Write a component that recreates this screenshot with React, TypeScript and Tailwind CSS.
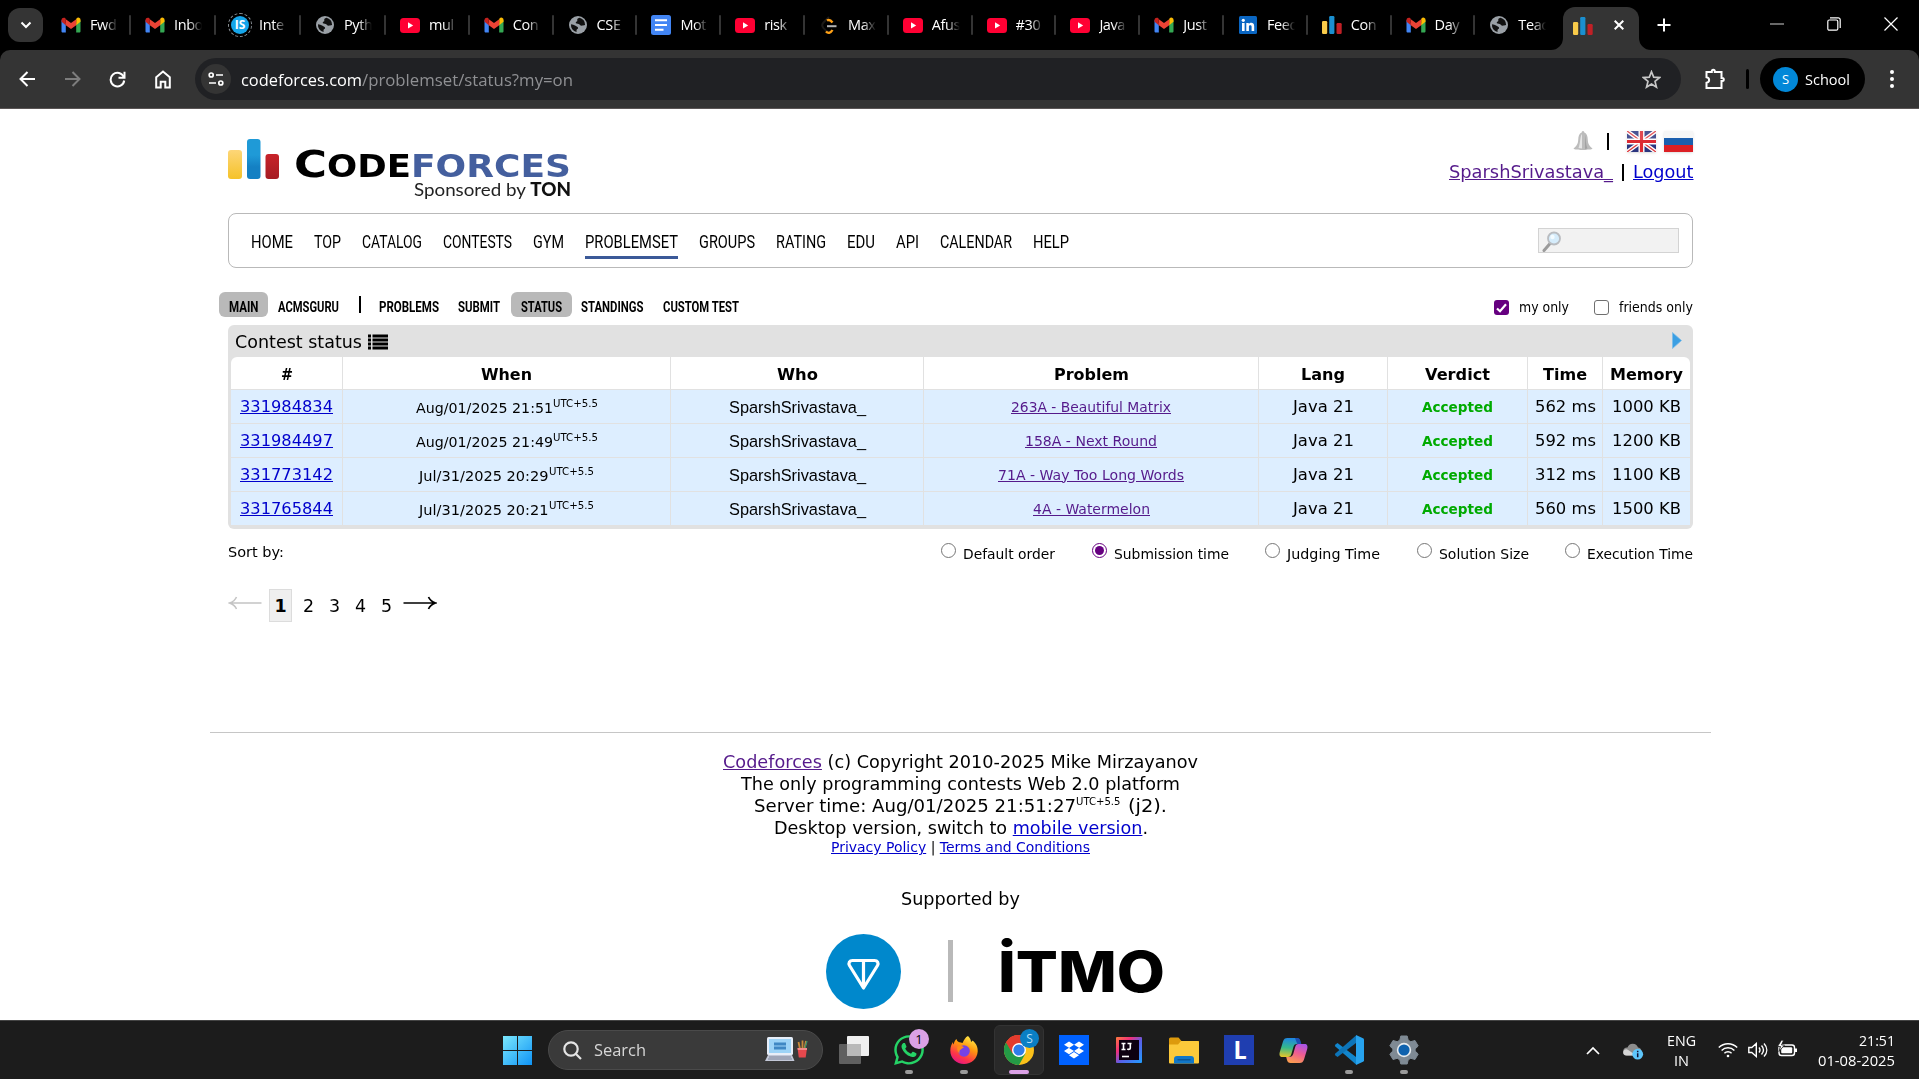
import { useLayoutEffect, useRef, useState } from "react";
import type { ReactNode } from "react";
import { FaDropbox, FaWhatsapp } from "react-icons/fa";

/** Text set to an exact advance width, so that a substitute font keeps the column rhythm. */
function Fit({ w, className = "", inner = "", children }: { w: number; className?: string; inner?: string; children: ReactNode }) {
  const ref = useRef<HTMLSpanElement>(null);
  const [scale, setScale] = useState(1);
  useLayoutEffect(() => {
    if (ref.current && ref.current.offsetWidth) {
      setScale(w / ref.current.getBoundingClientRect().width);
    }
  }, []);
  return (
    <span className={`inline-block shrink-0 whitespace-nowrap text-left ${className}`} style={{ width: w }}>
      <span ref={ref} className={`inline-block origin-left whitespace-nowrap ${inner}`} style={{ transform: `scaleX(${scale})` }}>
        {children}
      </span>
    </span>
  );
}

/* ---------- favicons ---------- */

const Gmail = () => (
  <svg width="20" height="16" viewBox="0 0 20 16" className="shrink-0">
    <path d="M0.5 3v11.2c0 .8.5 1.3 1.3 1.3h3V6.5z" fill="#4285f4" />
    <path d="M19.5 3v11.2c0 .8-.5 1.3-1.3 1.3h-3V6.5z" fill="#34a853" />
    <path d="M15.2 2.2v6l4.3-3.4V2.9c0-2-2.2-3-3.7-1.8z" fill="#fbbc04" />
    <path d="M4.8 8.2v-6L10 6l5.200-3.800v6L10 12z" fill="#ea4335" />
    <path d="M.5 2.900v1.900l4.300 3.400v-6L4.200 1.100C2.700 0 .5.900.5 2.900z" fill="#c5221f" />
  </svg>
);

const Youtube = () => (
  <svg width="20" height="15" viewBox="0 0 20 15" className="shrink-0">
    <rect width="20" height="15" rx="3.500" fill="#ff0033" />
    <path d="M8 4.300v6.200l5.200-3.100z" fill="#fff" />
  </svg>
);

const Globe = () => (
  <svg width="18" height="18" viewBox="0 0 18 18" className="shrink-0">
    <circle cx="9" cy="9" r="9" fill="#9aa0a6" />
    <path d="M10.500 1.800C8.500 2.200 8 3.200 8.300 4.500c.3 1.200-1.400 1-1.600 2.200-.1.900 1.800.9 3 1.200 1.500.4 1.300 1.800 2.700 1.800 1.300 0 1.900-.6 3.700-.7a7 7 0 0 0-5.600-7.200z" fill="#111" />
    <path d="M2 8.200c1.300.6 3.300.5 4.500 1.500 1 .9 2.700.8 2.600 2.200-.1 1.200-1.500 1-1.600 2.400 0 .8.200 1.200 0 1.700A7.100 7.100 0 0 1 2 8.200z" fill="#111" />
  </svg>
);

const Bars = () => (
  <svg width="20" height="18" viewBox="0 0 20 18" className="shrink-0">
    <rect x="0" y="5" width="5.200" height="13" rx="1.200" fill="#f9cb4a" />
    <rect x="7.200" y="0" width="5.200" height="18" rx="1.200" fill="#1a8fd0" />
    <rect x="14.500" y="7" width="5.200" height="11" rx="1.200" fill="#c02026" />
  </svg>
);

const Docs = () => (
  <svg width="20" height="20" viewBox="0 0 20 20" className="shrink-0">
    <rect width="20" height="20" rx="2.500" fill="#4285f4" />
    <path d="M4 5.200h12M4 10h12M4 14.800h8.500" stroke="#fff" strokeWidth="2" />
  </svg>
);

const Leet = () => (
  <svg width="18" height="20" viewBox="0 0 18 20" className="shrink-0">
    <path d="M9 2 3.500 7.500c-1.500 1.700-1.500 4 0 5.600l3 3c1.500 1.300 3.500 1.300 5 .2" stroke="#1c1a17" strokeWidth="2" fill="none" />
    <path d="M7 5.500c2-1.300 3.500-.8 5.500 2M6 16.500c2 2.200 4.500 1.800 6.500-1.500" stroke="#ffa116" strokeWidth="2.400" fill="none" />
    <path d="M7 11.200h9.500" stroke="#b3b3b3" strokeWidth="2" />
  </svg>
);

const Linkedin = () => (
  <svg width="18" height="18" viewBox="0 0 18 18" className="shrink-0">
    <rect width="18" height="18" rx="1.500" fill="#0a66c2" />
    <circle cx="4.300" cy="4.300" r="1.600" fill="#fff" />
    <path d="M3 7h2.600v8H3zM7.300 7h2.500v1.200c1.400-2.200 5.400-1.900 5.400 2V15h-2.600v-4.300c0-2-2.700-1.900-2.700 0V15H7.300z" fill="#fff" />
  </svg>
);

const Internshala = () => (
  <span className="flex size-6 shrink-0 items-center justify-center rounded-full border border-dashed border-[#8a9096]">
    <span className="flex size-[18px] items-center justify-center rounded-full bg-[#16a5e9] font-['Open_Sans',sans-serif] text-[12px] leading-none font-bold text-white">IS</span>
  </span>
);

const tabs: { icon: ReactNode; label: string; width: string }[] = [
  { icon: <Gmail />, label: "Fwd", width: "w-[84px]" },
  { icon: <Gmail />, label: "Inbo", width: "w-[85px]" },
  { icon: <Internshala />, label: "Inte", width: "w-[85px]" },
  { icon: <Globe />, label: "Pyth", width: "w-[85px]" },
  { icon: <Youtube />, label: "mul", width: "w-[83.8px]" },
  { icon: <Gmail />, label: "Con", width: "w-[83.8px]" },
  { icon: <Globe />, label: "CSE", width: "w-[83.8px]" },
  { icon: <Docs />, label: "Mot", width: "w-[83.8px]" },
  { icon: <Youtube />, label: "risk", width: "w-[83.8px]" },
  { icon: <Leet />, label: "Max", width: "w-[83.8px]" },
  { icon: <Youtube />, label: "Afus", width: "w-[83.8px]" },
  { icon: <Youtube />, label: "#30", width: "w-[83.8px]" },
  { icon: <Youtube />, label: "Java", width: "w-[83.8px]" },
  { icon: <Gmail />, label: "Just", width: "w-[83.8px]" },
  { icon: <Linkedin />, label: "Feed", width: "w-[83.8px]" },
  { icon: <Bars />, label: "Con", width: "w-[83.8px]" },
  { icon: <Gmail />, label: "Day", width: "w-[83.8px]" },
  { icon: <Globe />, label: "Teac", width: "w-[83.8px]" },
];

function TabStrip() {
  return (
    <div className="flex h-[50px] bg-black pl-2 text-white">
      <div className="mt-2 flex h-[34px] w-[35px] shrink-0 items-center justify-center rounded-xl bg-[#343434]">
        <svg width="12" height="8" viewBox="0 0 12 8" fill="none" stroke="#fff" strokeWidth="2">
          <path d="M1.500 1.500 6 6l4.500-4.500" />
        </svg>
      </div>
      <div className="ml-1 flex">
        {tabs.map((t, i) => (
          <div key={i} className={`flex h-[50px] shrink-0 items-center pl-[12px] ${t.width}`}>
            <span className="flex w-6 shrink-0 justify-center">{t.icon}</span>
            <span className="ml-[7px] w-[36px] shrink-0 font-['Open_Sans',sans-serif] text-[14.500px] leading-5 tracking-[-0.4px] whitespace-nowrap [mask-image:linear-gradient(to_right,black_40%,transparent_78%)]">
              {t.label}
            </span>
            {i < tabs.length - 1 && <span className="ml-auto h-5 w-[2px] shrink-0 rounded bg-[#343434]" />}
          </div>
        ))}
      </div>
      <div className="relative mt-[7px] ml-1 flex h-[43px] w-[76px] items-center rounded-t-xl bg-[#343434] pl-[10px]">
        <svg className="absolute bottom-0 -left-3" width="12" height="12" viewBox="0 0 12 12">
          <path d="M12 0v12H0A12 12 0 0 0 12 0z" fill="#343434" />
        </svg>
        <svg className="absolute -right-3 bottom-0" width="12" height="12" viewBox="0 0 12 12">
          <path d="M0 0v12h12A12 12 0 0 1 0 0z" fill="#343434" />
        </svg>
        <span className="-mt-[5px]"><Bars /></span>
        <svg className="-mt-2 ml-[21px]" width="10" height="10" viewBox="0 0 10 10" stroke="#fff" strokeWidth="2">
          <path d="M.7.700 9.300 9.300M9.300.700.700 9.300" />
        </svg>
      </div>
      <svg className="mt-[18px] ml-[18px]" width="14" height="14" viewBox="0 0 14 14" stroke="#fff" strokeWidth="2">
        <path d="M7 .5v13M.5 7h13" />
      </svg>
      <div className="ml-auto flex h-[50px] items-center gap-[43px] pr-[21px] pb-[2px]">
        <svg width="14" height="14" viewBox="0 0 14 14" stroke="#8b8b8b" strokeWidth="1.500"><path d="M0 7h14" /></svg>
        <svg width="14" height="14" viewBox="0 0 14 14" fill="none" stroke="#fff" strokeWidth="1.200">
          <rect x=".8" y="3" width="10" height="10.200" rx="1.500" />
          <path d="M3 .8h8.200a2 2 0 0 1 2 2V11" />
        </svg>
        <svg width="14" height="14" viewBox="0 0 14 14" stroke="#fff" strokeWidth="1.200"><path d="M.5.500 13.500 13.500M13.500.500.500 13.500" /></svg>
      </div>
    </div>
  );
}

function Toolbar() {
  return (
    <div className="bg-black">
      <div className="flex h-[58px] items-center rounded-t-[10px] bg-[#343434] text-white">
        <svg className="ml-[19px]" width="17" height="16" viewBox="0 0 17 16" fill="none" stroke="#fff" strokeWidth="2">
          <path d="M16 8H2M8.500 1 1.500 8l7 7" />
        </svg>
        <svg className="ml-[28px]" width="17" height="16" viewBox="0 0 17 16" fill="none" stroke="#7d7d7d" strokeWidth="2">
          <path d="M1 8h14M8.500 1l7 7-7 7" />
        </svg>
        <svg className="ml-[28px]" width="17" height="17" viewBox="0 0 17 17" fill="none" stroke="#fff" strokeWidth="2">
          <path d="M14.800 6.200A6.800 6.800 0 1 0 15.200 9.500" />
          <path d="M15.500.800v6h-6" />
        </svg>
        <svg className="ml-[29px]" width="16" height="19" viewBox="0 0 16 19" fill="none" stroke="#fff" strokeWidth="2">
          <path d="M1.200 7.200 8 1.600l6.800 5.600v10.300H10.300v-5.800H5.700v5.800H1.200z" />
        </svg>
        <div className="ml-[24px] flex h-[42px] w-[1486px] items-center rounded-full bg-[#202124] pl-[6px]">
          <span className="flex size-[30px] items-center justify-center rounded-full bg-[#343434]">
            <svg width="16" height="14" viewBox="0 0 16 14" fill="none" stroke="#fff" strokeWidth="1.700">
              <circle cx="3.200" cy="3" r="2" />
              <path d="M8 3h7M1 11h7" />
              <circle cx="12.800" cy="11" r="2" />
            </svg>
          </span>
          <span className="ml-[10px] flex pt-px font-['Open_Sans',sans-serif] text-[17px] leading-6">
            <Fit w={121}>codeforces.com</Fit>
            <Fit w={211} className="text-[#8f9093]">/problemset/status?my=on</Fit>
          </span>
          <svg className="mr-[20px] ml-auto" width="19" height="19" viewBox="0 0 20 20" fill="none" stroke="#c7c7c7" strokeWidth="1.800">
            <path d="m10 1.800 2.300 5.700 6.100.5-4.700 4 1.500 6L10 14.700 4.800 18l1.500-6-4.700-4 6.100-.5z" />
          </svg>
        </div>
        <svg className="ml-[23px]" width="22" height="22" viewBox="0 0 22 22" fill="none" stroke="#fff" strokeWidth="2">
          <path d="M2.500 4h5.300V3.200a1.500 1.500 0 0 1 3 0V4h6.700v6h.8a1.500 1.500 0 0 1 0 3h-.8v7h-15v-5.200c3.500-.6 3.500-5 0-5.600z" />
        </svg>
        <span className="ml-[20px] h-5 w-[3px] rounded bg-black" />
        <div className="ml-[11px] flex h-[42px] w-[105px] items-center rounded-full bg-black pl-[13px]">
          <span className="flex size-[25px] items-center justify-center rounded-full bg-[#0288d8] font-['Open_Sans',sans-serif] text-[13px] leading-none">S</span>
          <Fit w={45} className="-mt-px ml-[7px] font-['Open_Sans',sans-serif] text-[15px] leading-5">School</Fit>
        </div>
        <svg className="ml-[25px]" width="4" height="18" viewBox="0 0 4 18" fill="#fff">
          <circle cx="2" cy="2" r="2" /><circle cx="2" cy="9" r="2" /><circle cx="2" cy="16" r="2" />
        </svg>
      </div>
      <div className="h-px bg-[#5a5555]" />
    </div>
  );
}

/* ---------- page ---------- */

const nav: [string, number][] = [
  ["HOME", 42], ["TOP", 27], ["CATALOG", 60], ["CONTESTS", 69], ["GYM", 31], ["PROBLEMSET", 93],
  ["GROUPS", 56], ["RATING", 50], ["EDU", 28], ["API", 23], ["CALENDAR", 72], ["HELP", 36],
];

const UkFlag = () => (
  <svg width="29" height="21" viewBox="0 0 29 21" className="shadow-sm">
    <rect width="29" height="21" fill="#2b357f" />
    <path d="M0 0 29 21M29 0 0 21" stroke="#fff" strokeWidth="4" />
    <path d="M0 0 29 21M29 0 0 21" stroke="#dd3a40" strokeWidth="1.400" />
    <path d="M14.500 0v21M0 10.500h29" stroke="#fff" strokeWidth="6" />
    <path d="M14.500 0v21M0 10.500h29" stroke="#dd2a32" strokeWidth="3.200" />
    <rect width="29" height="9" fill="#fff" opacity=".15" />
  </svg>
);

const RuFlag = () => (
  <svg width="29" height="21" viewBox="0 0 29 21" className="shadow-sm">
    <rect width="29" height="7" fill="#f6f6f6" />
    <rect y="7" width="29" height="7" fill="#1b5fae" />
    <rect y="14" width="29" height="7" fill="#dc1f24" />
  </svg>
);

const Bell = () => (
  <svg width="20" height="20" viewBox="0 0 20 20">
    <path d="M10 0c1 0 1.300.8 1.300 1.600C14 2.600 14.600 5.200 14.800 9c.2 3.500 1.200 5.500 4.700 8.500-1 1.500-3.500 1-5 .9-2 .8-7 .8-9 0-1.500.1-4 .6-5-.9C4 14.500 5 12.500 5.200 9c.2-3.800.8-6.400 3.500-7.400C8.700.800 9 0 10 0z" fill="#bcbcbc" />
    <path d="M9 3C7 5 7.500 12 5.500 17l3.500.5z" fill="#e6e6e6" />
    <path d="M12 4c1 3 .5 9 2.500 13.500l-2.500.5z" fill="#a2a2a2" />
  </svg>
);

function Header() {
  return (
    <header className="flex h-[104px] justify-between">
      <div className="mt-[29px] flex items-start">
        <svg width="52" height="42" viewBox="0 0 52 42" className="shrink-0">
          <defs>
            <linearGradient id="cfY" x1="0" y1="0" x2="0" y2="1"><stop offset="0" stopColor="#fdd678" /><stop offset="1" stopColor="#f5c229" /></linearGradient>
            <linearGradient id="cfB" x1="0" y1="0" x2="0" y2="1"><stop offset=".4" stopColor="#1f9ad7" /><stop offset=".7" stopColor="#1480c3" /></linearGradient>
            <linearGradient id="cfR" x1="0" y1="0" x2="0" y2="1"><stop offset="0" stopColor="#c8232a" /><stop offset="1" stopColor="#a51c22" /></linearGradient>
          </defs>
          <rect x="0" y="12" width="14" height="29" rx="3" fill="url(#cfY)" />
          <rect x="19" y="1" width="13.500" height="40" rx="3" fill="url(#cfB)" />
          <rect x="37.500" y="16" width="13.500" height="25" rx="3" fill="url(#cfR)" />
        </svg>
        <div className="ml-[14px] pt-[9px]">
          <div className="flex h-[30px] items-baseline font-['DejaVu_Sans',sans-serif] leading-[35px] font-bold">
            <Fit w={33} className="text-[38px]">C</Fit>
            <Fit w={84} className="text-[32px]">ODE</Fit>
            <Fit w={160} className="text-[32px] text-[#445f9e]">FORCES</Fit>
          </div>
          <div className="flex justify-end font-['Lato',sans-serif] text-[18px] leading-[24px] text-[#222]">
            <Fit w={157}>Sponsored by <b className="font-black text-[#111]">TON</b></Fit>
          </div>
        </div>
      </div>
      <div className="mt-[21px] flex flex-col items-end">
        <div className="flex h-[22px] items-center">
          <Bell />
          <span className="ml-[14px] h-[17px] w-[2px] bg-black" />
          <span className="ml-[18px]"><UkFlag /></span>
          <span className="ml-[8px]"><RuFlag /></span>
        </div>
        <div className="mt-[8px] flex h-[24px] items-center text-[17.500px] leading-6">
          <Fit w={164} className="text-[#551a8b]" inner="underline">SparshSrivastava_</Fit>
          <span className="mx-[9px] h-[17px] w-[1.500px] bg-black" />
          <Fit w={60.500} className="text-[#0000cc]" inner="underline">Logout</Fit>
        </div>
      </div>
    </header>
  );
}

function Nav() {
  return (
    <nav className="flex h-[55px] items-center rounded-[8px] border border-[#b9b9b9] pr-[13px] pl-[22px]">
      <ul className="flex gap-[21px] font-['Roboto',sans-serif] text-[18.500px] leading-[24px]">
        {nav.map(([label, w]) => (
          <li key={label} className={label === "PROBLEMSET" ? "mt-[5px] h-[32px] border-b-[3px] border-[#3b5998] pt-[3px]" : "mt-[5px] h-[32px] pt-[3px]"}>
            <Fit w={w}>{label}</Fit>
          </li>
        ))}
      </ul>
      <div className="-mt-[1px] ml-auto flex h-[25px] w-[141px] items-center border border-[#d3d3d3] bg-[#f2f2f2] pt-[3px] pl-[3px]">
        <svg width="20" height="21" viewBox="0 0 20 21">
          <path d="M2 19.500 8.500 12" stroke="#9b9b9b" strokeWidth="3" strokeLinecap="round" />
          <circle cx="12" cy="7.500" r="6" fill="#d5ecfb" stroke="#b9bcc0" strokeWidth="1.800" />
          <circle cx="10.500" cy="6" r="2.200" fill="#f3fbff" />
        </svg>
      </div>
    </nav>
  );
}

function SubMenu() {
  return (
    <div className="flex h-[57px] items-start justify-between pt-[24px]">
      <div className="-ml-[9px] flex h-[25px] items-center font-['Roboto',sans-serif] text-[15px] leading-[20px] font-bold">
        <span className="flex h-[25px] w-[49px] items-center justify-center rounded-[6px] bg-[#b9b9b9] pt-[4px]"><Fit w={29.500}>MAIN</Fit></span>
        <Fit w={61} className="ml-[10px] pt-[4px]">ACMSGURU</Fit>
        <span className="ml-[20px] h-[17px] w-[1.500px] bg-black" />
        <Fit w={60} className="ml-[18px] pt-[4px]">PROBLEMS</Fit>
        <Fit w={42} className="ml-[19px] pt-[4px]">SUBMIT</Fit>
        <span className="ml-[11px] flex h-[25px] w-[61px] items-center justify-center rounded-[6px] bg-[#b9b9b9] pt-[4px]"><Fit w={41}>STATUS</Fit></span>
        <Fit w={62.500} className="ml-[9px] pt-[4px]">STANDINGS</Fit>
        <Fit w={76} className="ml-[20px] pt-[4px]">CUSTOM TEST</Fit>
      </div>
      <div className="flex h-[31px] items-center text-[13.500px] leading-5">
        <span className="flex size-[15px] items-center justify-center rounded-[3px] bg-[#660080]">
          <svg width="11" height="10" viewBox="0 0 11 10" fill="none" stroke="#fff" strokeWidth="2.200"><path d="M1 5.500 4 8.200 10 1.200" /></svg>
        </span>
        <Fit w={50} className="-mt-[2px] ml-[10px]">my only</Fit>
        <span className="ml-[25px] size-[15px] rounded-[3px] border border-[#6f6f6f] bg-white" />
        <Fit w={74} className="-mt-[2px] ml-[10px]">friends only</Fit>
      </div>
    </div>
  );
}

const rows = [
  { id: "331984834", when: "Aug/01/2025 21:51", ww: 137, problem: "263A - Beautiful Matrix", pw: 160, time: "562 ms", mem: "1000 KB" },
  { id: "331984497", when: "Aug/01/2025 21:49", ww: 137, problem: "158A - Next Round", pw: 132, time: "592 ms", mem: "1200 KB" },
  { id: "331773142", when: "Jul/31/2025 20:29", ww: 129.500, problem: "71A - Way Too Long Words", pw: 186, time: "312 ms", mem: "1100 KB" },
  { id: "331765844", when: "Jul/31/2025 20:21", ww: 129.500, problem: "4A - Watermelon", pw: 117, time: "560 ms", mem: "1500 KB" },
];

const heads: [string, number][] = [
  ["#", 12], ["When", 51], ["Who", 41], ["Problem", 75], ["Lang", 44], ["Verdict", 65], ["Time", 44], ["Memory", 73],
];

const cell = "flex items-center justify-center border-r border-[#e1e1e1] last:border-r-0";
const grid = "grid grid-cols-[112px_328px_253px_335px_129px_140px_75px_1fr]";

function StatusTable() {
  return (
    <section className="h-[204px] rounded-[6px] bg-[#e1e1e1] px-[3px]">
      <div className="flex h-[32px] items-center pl-[4px] text-[17.500px] leading-6">
        <Fit w={127} className="pt-px">Contest status</Fit>
        <svg className="mt-[2px] ml-[6px]" width="20" height="16" viewBox="0 0 20 16">
          <path d="M0 2h3M0 6h3M0 10h3M0 14h3M4.500 2H20M4.500 6H20M4.500 10H20M4.500 14H20" stroke="#000" strokeWidth="2.800" />
        </svg>
        <svg className="mr-[8px] ml-auto -translate-y-px" width="10" height="17" viewBox="0 0 10 17">
          <path d="M.5.500 9.500 8.500.500 16.500z" fill="#3b9fe3" stroke="#7cbce8" strokeWidth=".8" />
        </svg>
      </div>
      <div className={`${grid} h-[33px] rounded-t-[6px] border-b border-[#e1e1e1] bg-white text-[16.250px] leading-6 font-bold`}>
        {heads.map(([h, w]) => (
          <div key={h} className={`${cell} pt-[3px]`}><Fit w={w}>{h}</Fit></div>
        ))}
      </div>
      {rows.map((r) => (
        <div key={r.id} className={`${grid} h-[34px] border-b border-[#e1e1e1] bg-[#ddeeff] text-[16.250px] leading-6`}>
          <div className={cell}><Fit w={93} className="pt-px text-[#0000cc]" inner="underline">{r.id}</Fit></div>
          <div className={cell}>
            <Fit w={r.ww} className="pt-[2px] text-[13.750px]">{r.when}</Fit>
            <Fit w={45} className="-mt-[7px] text-[10.300px]">UTC+5.5</Fit>
          </div>
          <div className={cell}><Fit w={137} className="font-['Liberation_Sans',sans-serif]">SparshSrivastava_</Fit></div>
          <div className={cell}><Fit w={r.pw} className="text-[13.750px] text-[#551a8b]" inner="underline">{r.problem}</Fit></div>
          <div className={cell}><Fit w={61} className="pt-px">Java 21</Fit></div>
          <div className={cell}><Fit w={71} className="text-[13.500px] font-bold text-[#00aa00]">Accepted</Fit></div>
          <div className={cell}><Fit w={61} className="pt-px">{r.time}</Fit></div>
          <div className={cell}><Fit w={69} className="pt-px">{r.mem}</Fit></div>
        </div>
      ))}
    </section>
  );
}

const sorts: [string, number][] = [
  ["Default order", 92], ["Submission time", 115], ["Judging Time", 93], ["Solution Size", 90], ["Execution Time", 106],
];

function SortBar() {
  return (
    <div className="mt-[12px] flex h-[24px] items-center text-[13.500px] leading-5">
      <Fit w={56} className="-mt-[3px]">Sort by:</Fit>
      <div className="ml-auto flex gap-[36.500px]">
        {sorts.map(([s, w], i) => (
          <span key={s} className="flex items-center">
            <span className={i === 1 ? "-mt-[5px] flex size-[15px] items-center justify-center rounded-full border-[1.500px] border-[#660080]" : "-mt-[5px] size-[15px] rounded-full border border-[#767676]"}>
              {i === 1 && <span className="size-[9px] rounded-full bg-[#660080]" />}
            </span>
            <Fit w={w} className="mt-[2px] ml-[7px]">{s}</Fit>
          </span>
        ))}
      </div>
    </div>
  );
}

function Pager() {
  return (
    <div className="mt-[24px] flex h-[33px] items-center text-[17.500px] leading-6">
      <svg width="34" height="14" viewBox="0 0 34 14" fill="none" stroke="#c4c4c4" strokeWidth="1.500" className="-mt-[5px]">
        <path d="M33.500 7H2M8.500 1C7 4.500 4.500 6 1.500 7c3 1 5.500 2.500 7 6" />
      </svg>
      <span className="ml-[7px] flex h-[33px] w-[23px] items-center justify-center border border-[#dcdcdc] bg-[#efefef] font-bold">1</span>
      <span className="ml-[11px] flex gap-[15px]">
        {["2", "3", "4", "5"].map((n) => <Fit key={n} w={11.100}>{n}</Fit>)}
      </span>
      <svg width="34" height="14" viewBox="0 0 34 14" fill="none" stroke="#000" strokeWidth="1.700" className="-mt-[5px] ml-[11px]">
        <path d="M.5 7H32M25.500 1c1.500 3.500 4 5 7 6-3 1-5.500 2.500-7 6" />
      </svg>
    </div>
  );
}

function Footer() {
  return (
    <footer className="mt-[110px] -mx-[18px] flex flex-col items-center border-t border-[#c6c6c6] pt-[18px] text-[17.500px] leading-[22px]">
      <Fit w={475}><span className="text-[#551a8b] underline">Codeforces</span> (c) Copyright 2010-2025 Mike Mirzayanov</Fit>
      <Fit w={439}>The only programming contests Web 2.0 platform</Fit>
      <span className="flex h-[22px]">
        <Fit w={322}>Server time: Aug/01/2025 21:51:27</Fit>
        <Fit w={44.500} className="-mt-[4px] text-[10px]">UTC+5.5</Fit>
        <Fit w={39} className="ml-[7px]">(j2).</Fit>
      </span>
      <Fit w={374}>Desktop version, switch to <span className="text-[#0000cc] underline">mobile version</span>.</Fit>
      <Fit w={259} className="-mt-px h-[19px] text-[14px] leading-[18px]"><span className="text-[#0000cc] underline">Privacy Policy</span> | <span className="text-[#0000cc] underline">Terms and Conditions</span></Fit>
      <Fit w={119} className="mt-[31px]">Supported by</Fit>
      <div className="mt-[24px] flex h-[75px] items-start pl-[70px]">
        <svg width="75" height="75" viewBox="0 0 75 75">
          <circle cx="37.500" cy="37.500" r="37.500" fill="#0088cc" />
          <path d="M26.500 26.500h22c3 0 4.300 2.500 3 5L37.500 54 23.500 31.500c-1.300-2.500 0-5 3-5zM37.500 27v26" fill="none" stroke="#fff" strokeWidth="3.200" strokeLinejoin="round" />
        </svg>
        <span className="mt-[6px] ml-[47px] h-[62px] w-[5px] bg-[#b9b9b9]" />
        <Fit w={167} className="ml-[45px] font-['Inter',sans-serif] text-[56px] leading-[77px] font-extrabold">İTMO</Fit>
      </div>
    </footer>
  );
}

/* ---------- taskbar ---------- */

function Slot({ children, mark = "" }: { children: ReactNode; mark?: string }) {
  return (
    <div className="relative flex h-[50px] w-[55px] shrink-0 items-center justify-center">
      {children}
      {mark && <span className={`absolute bottom-[1px] left-1/2 h-1 -translate-x-1/2 rounded-full ${mark}`} />}
    </div>
  );
}

function Taskbar() {
  return (
    <div className="flex h-[59px] items-center border-t border-[#444] bg-[#1c1c1c] font-['Open_Sans',sans-serif] text-white">
      <svg className="ml-[503px] shrink-0" width="29" height="29" viewBox="0 0 29 29">
        <defs><linearGradient id="win" x1="0" y1="0" x2="1" y2="1"><stop offset="0" stopColor="#7be8fd" /><stop offset="1" stopColor="#0f93f5" /></linearGradient></defs>
        <path d="M0 0h14v14H0zM15 0h14v14H15zM0 15h14v14H0zM15 15h14v14H15z" fill="url(#win)" />
      </svg>
      <div className="ml-[16px] flex h-[40px] w-[275px] shrink-0 items-center rounded-full border border-[#4a4a4a] bg-[#3a3a3a] pl-[14px]">
        <svg width="19" height="19" viewBox="0 0 19 19" fill="none" stroke="#e4e4e4" strokeWidth="2.200"><circle cx="8" cy="8" r="6.700" /><path d="m13 13 5 5" /></svg>
        <Fit w={52} className="ml-[12px] text-[17px] leading-6 text-[#d6d6d6]">Search</Fit>
        <svg className="ml-[118px]" width="46" height="28" viewBox="0 0 46 28">
          <rect x="3" y="1" width="26" height="18" rx="1.500" fill="#e8eef8" />
          <rect x="5" y="3" width="22" height="14" fill="#9dd3f7" />
          <rect x="10" y="6.500" width="12" height="7" fill="#3f87c4" />
          <path d="M10 10h12" stroke="#9ed3f7" strokeWidth="1" />
          <path d="M4 19h24l2.500 6H1z" fill="#c3c8d8" /><path d="M5 21h22M4 23h24" stroke="#7c8499" strokeWidth="1" />
          <path d="m36 13-1.500-7M38.500 13V4.500M40.500 13l1.500-8" stroke="#c98a3a" strokeWidth="1.800" /><path d="m41 12 2-7" stroke="#3a8d6a" strokeWidth="1.300" />
          <path d="M33.500 12h9.500l-1.300 9.500h-6.900z" fill="#e5484d" /><path d="M33.500 12h9.500v2h-9.200z" fill="#f58a8a" />
        </svg>
      </div>
      <div className="ml-[3px] flex">
        <Slot>
          <svg width="30" height="28" viewBox="0 0 30 28"><rect x="8" y="0" width="22" height="20" rx="1" fill="#f0f0f0" /><rect x="0" y="8" width="22" height="20" rx="1" fill="#6b6b6b" opacity=".85" /><rect x="8" y="8" width="14" height="12" fill="#b9b9b9" /></svg>
        </Slot>
        <Slot mark="w-2 bg-[#9a9a9a]">
          <FaWhatsapp className="size-[34px] text-[#25d366]" />
          <span className="absolute top-[4px] left-[28px] flex size-5 items-center justify-center rounded-full bg-[#dba1e6] text-[13px] leading-none text-black">1</span>
        </Slot>
        <Slot mark="w-2 bg-[#9a9a9a]">
          <svg width="30" height="30" viewBox="0 0 30 30">
            <defs>
              <linearGradient id="ff" x1=".8" y1="0" x2=".3" y2="1"><stop offset="0" stopColor="#fff44f" /><stop offset=".4" stopColor="#ff980e" /><stop offset=".75" stopColor="#ff3647" /><stop offset="1" stopColor="#e31587" /></linearGradient>
            </defs>
            <path d="M19 1c2 2 3 4 3 6 1-.5 1.500-1.500 1.500-1.500C27 8 29 12 28.700 16.500 28.200 24 22.500 29 15 29S1.300 23.500 1.300 15.500C1.300 12 2.500 9 4 7c0 1 .3 2 .8 2.500C5 6.500 6.500 5 7.500 4c.3 1.500 1 2.500 2.500 3.200 1 .2 2.500.2 3.500.8C15 5 16.500 2 19 1z" fill="url(#ff)" />
            <circle cx="15" cy="16" r="5.800" fill="#7542e5" />
            <path d="M8.500 11.500c2-1.500 5-.5 6.500 1-2 .3-2 1.500-4 2.500-1 1.500-.5 3 0 4-2-1.500-3.500-4.500-2.500-7.500z" fill="#ff8a16" />
          </svg>
        </Slot>
        <Slot mark="w-5 bg-[#dba1e6]">
          <span className="absolute inset-y-0 left-[2.500px] w-[50px] rounded-md border border-[#333] bg-[#292929]" />
          <svg className="relative" width="30" height="30" viewBox="0 0 30 30">
            <circle cx="15" cy="15" r="15" fill="#fbc11a" />
            <path d="M15 15 2 7.500a15 15 0 0 1 26 0z" fill="#e33b2e" />
            <path d="M15 15 2 7.500A15 15 0 0 0 15 30l6.500-11.500z" fill="#249a46" />
            <path d="M15 8.200h13.400A15 15 0 0 0 2 7.500l6.500 11z" fill="#e33b2e" />
            <circle cx="15" cy="15" r="7" fill="#fff" /><circle cx="15" cy="15" r="5.600" fill="#2f7de9" />
          </svg>
          <span className="absolute top-[4px] left-[29px] flex size-[19px] items-center justify-center rounded-full bg-[#0a7fc4] text-[12px] leading-none text-[#b8dff5]">S</span>
        </Slot>
        <Slot><span className="flex size-[30px] items-center justify-center bg-[#0061fe]"><FaDropbox className="size-[20px] text-white" /></span></Slot>
        <Slot>
          <svg width="26" height="26" viewBox="0 0 26 26">
            <defs><linearGradient id="ij" x1="0" y1="0" x2="1" y2="1"><stop offset="0" stopColor="#ff7a3c" /><stop offset=".3" stopColor="#f02f7c" /><stop offset=".55" stopColor="#5a5fe8" /><stop offset="1" stopColor="#1f9fff" /></linearGradient></defs>
            <rect width="26" height="26" rx="1" fill="url(#ij)" /><rect x="3" y="3" width="20" height="20" fill="#0d0010" />
            <path d="M5.500 6.500h4M7.500 6.500v6M5.500 12.500h4M11.500 6.500h4M14.300 6.500v4.500c0 1.500-1.800 1.800-3 .8" stroke="#fff" strokeWidth="1.600" fill="none" /><path d="M6 19.500h7" stroke="#fff" strokeWidth="1.600" />
          </svg>
        </Slot>
        <Slot>
          <svg width="30" height="27" viewBox="0 0 30 27">
            <path d="M0 2a1.500 1.500 0 0 1 1.500-1.500h8L12.500 4H30v6H0z" fill="#dd9a0c" />
            <path d="M0 7.500h9L12 4h16.500A1.500 1.500 0 0 1 30 5.500v20a1 1 0 0 1-1 1H1a1 1 0 0 1-1-1z" fill="#fcc93a" />
            <path d="M5 26.500v-4.500a3 3 0 0 1 3-3h14a3 3 0 0 1 3 3v4.500z" fill="#1177c8" /><path d="M8.500 22.800h13" stroke="#0a4f8c" strokeWidth="1.200" />
          </svg>
        </Slot>
        <Slot><span className="flex size-[30px] items-center justify-center bg-[#1f3eb0] pl-[3px] font-['Lato',sans-serif] text-[24px] leading-none font-black">L</span></Slot>
        <Slot>
          <svg width="29" height="27" viewBox="0 0 29 27">
            <defs>
              <linearGradient id="cpA" x1=".3" y1="0" x2=".2" y2="1"><stop offset="0" stopColor="#1f86e0" /><stop offset=".5" stopColor="#35b98a" /><stop offset="1" stopColor="#e9c528" /></linearGradient>
              <linearGradient id="cpB" x1=".8" y1="0" x2=".4" y2="1"><stop offset="0" stopColor="#a654ea" /><stop offset=".5" stopColor="#ee5c92" /><stop offset="1" stopColor="#fb9a52" /></linearGradient>
            </defs>
            <path d="M8.500 1h9c2 0 3 1.300 3.500 3l.8 3h-4c-2 0-2.800 1-3.400 3l-2 7c-.6 2-1.400 3-3.400 3H3.500C.8 20 0 18 .8 15L4 4.500C4.800 2 6 1 8.500 1z" fill="url(#cpA)" />
            <path d="M20.500 26h-9c-2 0-3-1.300-3.500-3l-.8-3h3c2 0 3.400-1 4-3l2-7c.6-2 1.400-3 3.400-3h5.900c2.700 0 3.500 2 2.700 5L25 22.500c-.8 2.500-2 3.500-4.500 3.500z" fill="url(#cpB)" />
            <path d="M16 1h2c2 0 3 1.300 3.500 3l.8 3h-4z" fill="#1b4fb3" />
          </svg>
        </Slot>
        <Slot mark="w-2 bg-[#9a9a9a]">
          <svg width="30" height="30" viewBox="0 0 30 30">
            <path d="M1.500 9.500 3.500 8 22 22v7.500L.8 11z" fill="#1286cd" /><path d="M1.500 20.500l2 1.500L22 8V.5L.8 19z" fill="#0d74b8" />
            <path d="M22 0l7 3.200c.6.300 1 .8 1 1.500v20.600c0 .7-.4 1.200-1 1.500L22 30z" fill="#27a3ee" />
          </svg>
        </Slot>
        <Slot mark="w-2 bg-[#9a9a9a]">
          <svg width="30" height="30" viewBox="0 0 30 30">
            <path d="M11.800 1h6.400l1 4.200 2.600 1.500 4.200-1.200 3.200 5.500-3.100 3v2l3.100 3-3.200 5.500-4.200-1.200-2.600 1.500-1 4.200h-6.400l-1-4.200-2.600-1.500L4 24.500.8 19l3.100-3v-2L.8 11 4 5.500l4.200 1.200 2.600-1.500z" fill="#7f8a94" stroke="#7f8a94" strokeWidth="1" strokeLinejoin="round" />
            <circle cx="15" cy="15" r="7.200" fill="#e8ecef" /><circle cx="15" cy="15" r="5.600" fill="#0f62ae" />
          </svg>
        </Slot>
      </div>
      <svg className="ml-[155px]" width="14" height="9" viewBox="0 0 14 9" fill="none" stroke="#fff" strokeWidth="1.700"><path d="M1 8l6-6 6 6" /></svg>
      <svg className="mt-[2px] ml-[23px]" width="21" height="17" viewBox="0 0 21 17">
        <path d="M4 12.500a4 4 0 0 1 .5-8A5.500 5.500 0 0 1 15 4.500c3 .5 4 3 3 6l-3 2z" fill="#8d8d8d" /><path d="M3.500 12.500C1 12.500 0 11 .2 9c.4-2.500 3-3.500 5-2l8 5.500z" fill="#d5d5d5" />
        <circle cx="14.700" cy="11.200" r="5.400" fill="#5ec6fb" /><path d="M14.700 10.300v4M14.700 7.800v1.500" stroke="#113" strokeWidth="1.500" />
      </svg>
      <div className="-mt-px ml-[21px] flex w-[32px] flex-col items-center text-[15px] leading-5"><Fit w={29}>ENG</Fit><Fit w={15}>IN</Fit></div>
      <svg className="ml-[21px]" width="20" height="16" viewBox="0 0 20 16" fill="none" stroke="#fff" strokeWidth="1.500">
        <path d="M.8 5.500a13 13 0 0 1 18.400 0M3.600 8.500a9 9 0 0 1 12.800 0M6.400 11.300a5 5 0 0 1 7.200 0" /><circle cx="10" cy="14" r="1.300" fill="#fff" stroke="none" />
      </svg>
      <svg className="ml-[10px]" width="20" height="16" viewBox="0 0 20 16" fill="none" stroke="#fff" strokeWidth="1.400">
        <path d="M.8 5.500h3L8.300 1.500v13L3.800 10.500h-3zM11 5.500c1.200 1.500 1.200 3.500 0 5M13.500 3.500c2.500 2.800 2.500 6.200 0 9M16 1.500c3.700 4 3.700 9 0 13" />
      </svg>
      <svg className="-mt-[3px] ml-[9px]" width="21" height="17" viewBox="0 0 21 17">
        <rect x="2" y="5" width="15.500" height="10.500" rx="2.500" fill="none" stroke="#fff" strokeWidth="1.400" /><rect x="4.200" y="7.200" width="11" height="6" rx="1" fill="#fff" /><path d="M19 8.500v3.500" stroke="#fff" strokeWidth="2" />
        <path d="M4.500 0 .5 6.500h3L2 11.500 7.500 5H4.500L6.500.500z" fill="#fff" stroke="#1c1c1c" strokeWidth=".8" />
      </svg>
      <div className="-mt-px ml-[20px] flex w-[77px] flex-col items-end text-[15px] leading-5"><Fit w={36}>21:51</Fit><Fit w={77}>01-08-2025</Fit></div>
    </div>
  );
}

export default function App() {
  return (
    <div className="flex h-[1079px] w-[1919px] flex-col overflow-hidden bg-white">
      <TabStrip />
      <Toolbar />
      <main className="ml-[228px] h-[911px] w-[1465px] shrink-0 overflow-visible font-['DejaVu_Sans',sans-serif] text-black">
        <Header />
        <Nav />
        <SubMenu />
        <StatusTable />
        <SortBar />
        <Pager />
        <Footer />
      </main>
      <Taskbar />
    </div>
  );
}
